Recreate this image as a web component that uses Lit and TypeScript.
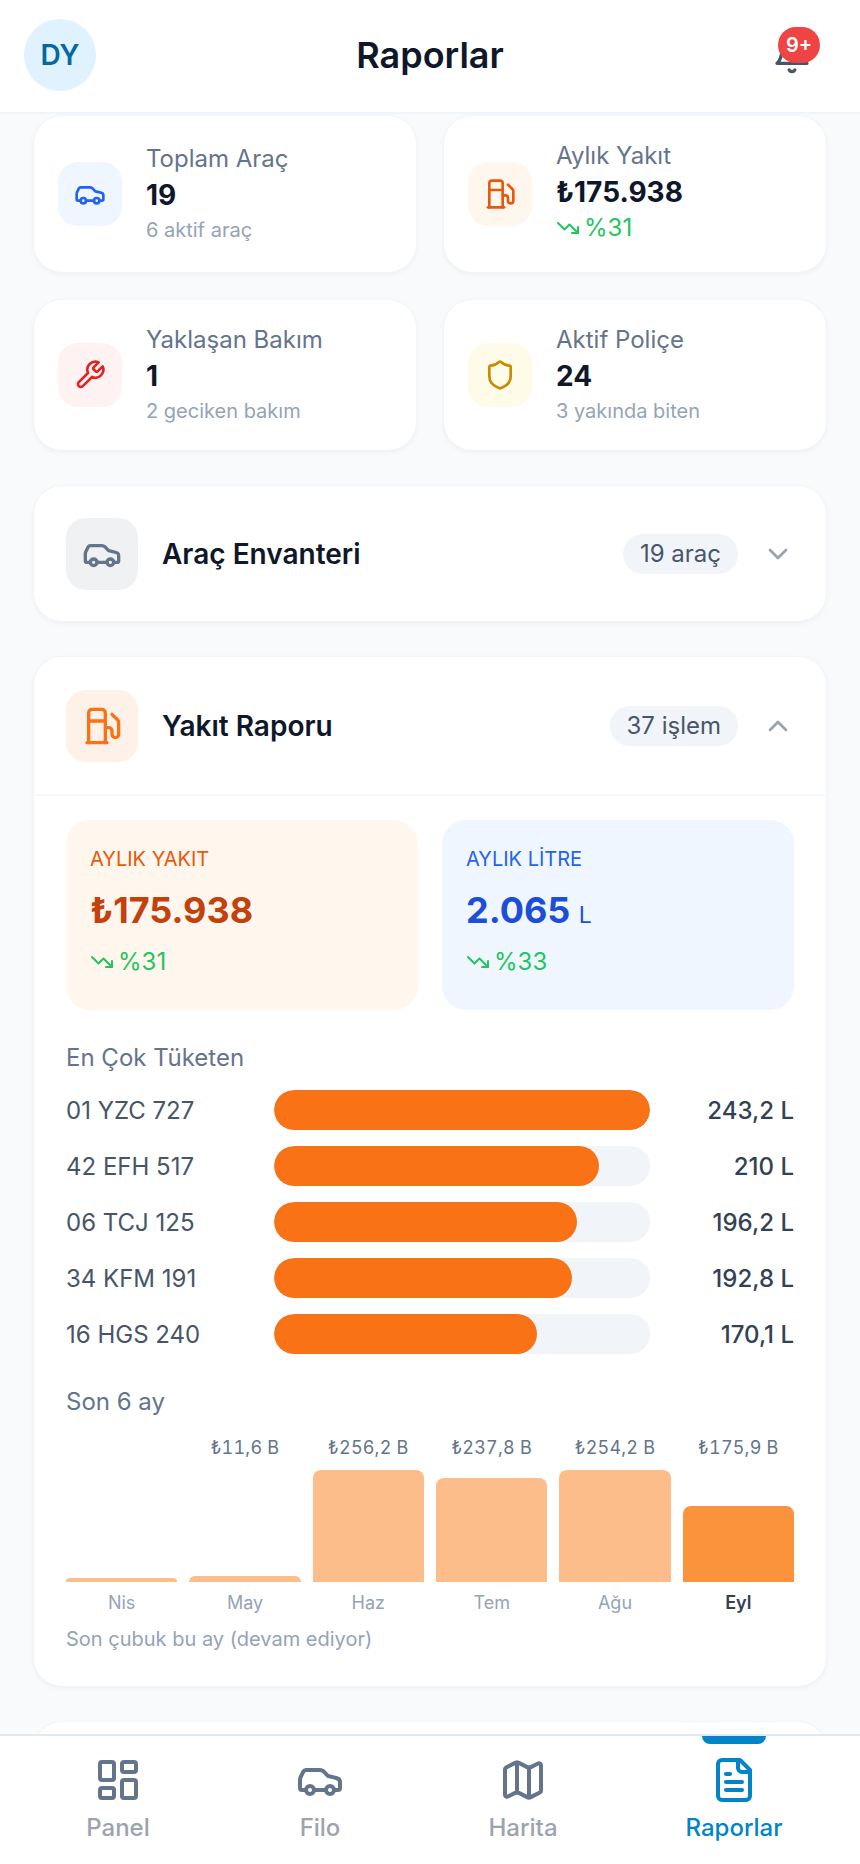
import { LitElement, html, css, svg } from "lit";
import { customElement } from "lit/decorators.js";

const I: Record<string, any> = {
  car: svg`<path d="M19 17h2c.6 0 1-.4 1-1v-3c0-.9-.7-1.7-1.5-1.9C18.7 10.6 16 10 16 10s-1.3-1.4-2.2-2.3c-.5-.4-1.1-.7-1.8-.7H5c-.6 0-1.1.4-1.4.9l-1.4 2.9A3.7 3.7 0 0 0 2 12v4c0 .6.4 1 1 1h2"/><circle cx="7" cy="17" r="2"/><path d="M9 17h6"/><circle cx="17" cy="17" r="2"/>`,
  fuel: svg`<line x1="3" x2="15" y1="22" y2="22"/><line x1="4" x2="14" y1="9" y2="9"/><path d="M14 22V4a2 2 0 0 0-2-2H6a2 2 0 0 0-2 2v18"/><path d="M14 13h2a2 2 0 0 1 2 2v2a2 2 0 0 0 2 2a2 2 0 0 0 2-2V9.83a2 2 0 0 0-.59-1.42L18 5"/>`,
  wrench: svg`<path d="M14.7 6.3a1 1 0 0 0 0 1.4l1.6 1.6a1 1 0 0 0 1.4 0l3.77-3.77a6 6 0 0 1-7.94 7.94l-6.91 6.91a2.12 2.12 0 0 1-3-3l6.91-6.91a6 6 0 0 1 7.94-7.94l-3.76 3.76z"/>`,
  shield: svg`<path d="M20 13c0 5-3.5 7.5-7.66 8.95a1 1 0 0 1-.67-.01C7.5 20.5 4 18 4 13V6a1 1 0 0 1 1-1c2 0 4.5-1.2 6.24-2.72a1.17 1.17 0 0 1 1.52 0C14.51 3.81 17 5 19 5a1 1 0 0 1 1 1z"/>`,
  grid: svg`<rect width="7" height="9" x="3" y="3" rx="1"/><rect width="7" height="5" x="14" y="3" rx="1"/><rect width="7" height="9" x="14" y="12" rx="1"/><rect width="7" height="5" x="3" y="16" rx="1"/>`,
  map: svg`<path d="M14.106 5.553a2 2 0 0 0 1.788 0l3.659-1.83A1 1 0 0 1 21 4.619v12.764a1 1 0 0 1-.553.894l-4.553 2.277a2 2 0 0 1-1.788 0l-4.212-2.106a2 2 0 0 0-1.788 0l-3.659 1.83A1 1 0 0 1 3 19.381V6.618a1 1 0 0 1 .553-.894l4.553-2.277a2 2 0 0 1 1.788 0z"/><path d="M15 5.764v15"/><path d="M9 3.236v15"/>`,
  file: svg`<path d="M15 2H6a2 2 0 0 0-2 2v16a2 2 0 0 0 2 2h12a2 2 0 0 0 2-2V7Z"/><path d="M14 2v4a2 2 0 0 0 2 2h4"/><path d="M10 9H8"/><path d="M16 13H8"/><path d="M16 17H8"/>`,
  bell: svg`<path d="M6 8a6 6 0 0 1 12 0c0 7 3 9 3 9H3s3-2 3-9"/><path d="M10.3 21a1.94 1.94 0 0 0 3.4 0"/>`,
  down: svg`<polyline points="22 17 13.5 8.5 8.5 13.5 2 7"/><polyline points="16 17 22 17 22 11"/>`,
  chevD: svg`<path d="m6 9 6 6 6-6"/>`,
  chevU: svg`<path d="m18 15-6-6-6 6"/>`,
};

const icon = (n: string, s: number) => html`<svg width=${s} height=${s} viewBox="0 0 24 24" fill="none" stroke="currentColor" stroke-width="2" stroke-linecap="round" stroke-linejoin="round">${I[n]}</svg>`;

const trend = (t: string, s = 24) => html`<span class="trend">${icon("down", s)}<span>${t}</span></span>`;

const rows = [
  ["01 YZC 727", 243.2, "243,2 L"],
  ["42 EFH 517", 210, "210 L"],
  ["06 TCJ 125", 196.2, "196,2 L"],
  ["34 KFM 191", 192.8, "192,8 L"],
  ["16 HGS 240", 170.1, "170,1 L"],
] as const;

const months = [
  ["Nis", "", 4],
  ["May", "₺11,6 B", 6],
  ["Haz", "₺256,2 B", 112],
  ["Tem", "₺237,8 B", 104],
  ["Ağu", "₺254,2 B", 112],
  ["Eyl", "₺175,9 B", 76],
] as const;

@customElement("app-root")
export class AppRoot extends LitElement {
  static styles = css`
    :host { display: block; font-family: Inter, "Noto Sans", sans-serif; color: #0f172a; }
    * { box-sizing: border-box; }
    svg { display: block; flex: none; }
    .screen { height: 1864px; display: flex; flex-direction: column; background: #f8fafc; overflow: hidden; }
    header { height: 114px; flex: none; background: #fff; border-bottom: 2px solid #f1f5f9; display: grid; grid-template-columns: 1fr auto 1fr; align-items: center; padding: 0 24px 2px; }
    .avatar { width: 72px; height: 72px; border-radius: 50%; background: #e0f2fe; color: #0369a1; font-size: 28px; font-weight: 600; display: flex; align-items: center; justify-content: center; }
    h1 { margin: 0; font-size: 36px; font-weight: 600; line-height: 44px; }
    .bell { justify-self: end; margin-right: 24px; position: relative; color: #475569; }
    .badge { position: absolute; left: 6px; top: -8px; width: 42px; height: 36px; border-radius: 18px; background: #ef4444; color: #fff; font-size: 20px; font-weight: 600; display: flex; align-items: center; justify-content: center; }
    main { flex: 1; min-height: 0; overflow: hidden; padding: 2px 34px 0; display: flex; flex-direction: column; gap: 36px; }
    .stats { display: grid; grid-template-columns: 382px 382px; column-gap: 28px; row-gap: 28px; }
    .card { background: #fff; border-radius: 28px; box-shadow: 0 0 0 1px rgba(241,245,249,.7), 0 2px 6px rgba(15,23,42,.05); }
    .stat { display: flex; align-items: center; gap: 24px; padding: 23px 24px; }
    .stat-ic { width: 64px; height: 64px; border-radius: 20px; display: flex; align-items: center; justify-content: center; flex: none; }
    .blue { background: #eff6ff; color: #2563eb; }
    .orange { background: #fff7ed; color: #ea580c; }
    .red { background: #fef2f2; color: #dc2626; }
    .yellow { background: #fefce8; color: #ca8a04; }
    .st-label { font-size: 24px; line-height: 34px; color: #64748b; }
    .st-value { font-size: 28px; font-weight: 700; line-height: 38px; }
    .st-sub { font-size: 20px; line-height: 32px; color: #94a3b8; }
    .trend { display: flex; align-items: center; gap: 4px; color: #22c55e; font-size: 24px; line-height: 34px; }
    .stat .trend { padding-bottom: 4px; }
    .sec-head { display: flex; align-items: center; gap: 24px; padding: 0 32px; height: 135px; }
    .sec-ic { width: 72px; height: 72px; border-radius: 20px; display: flex; align-items: center; justify-content: center; flex: none; }
    .slate { background: rgba(100,116,139,.1); color: #64748b; }
    .peach { background: rgba(249,115,22,.1); color: #f97316; }
    h2 { margin: 0; flex: 1; font-size: 28px; font-weight: 600; line-height: 36px; }
    .pill { height: 40px; padding: 0 17px; border-radius: 20px; background: #f1f5f9; color: #475569; font-size: 24px; display: flex; align-items: center; }
    .chev { color: #94a3b8; }
    .sec-open .sec-head { height: 139px; border-bottom: 2px solid #f8fafc; }
    .body { padding: 24px 32px 33px; }
    .tiles { display: grid; grid-template-columns: 1fr 1fr; gap: 24px; }
    .tile { height: 190px; border-radius: 24px; padding: 23px 24px; }
    .tile.o { background: #fff7ed; }
    .tile.b { background: #eff6ff; }
    .t-label { font-size: 20px; line-height: 32px; }
    .o .t-label { color: #ea580c; }
    .b .t-label { color: #2563eb; }
    .t-value { font-size: 36px; font-weight: 700; height: 56px; line-height: 56px; margin-top: 7px; }
    .o .t-value { color: #c2410c; }
    .b .t-value { color: #1d4ed8; }
    .t-value small { font-size: 23px; font-weight: 400; }
    .tile .trend { margin-top: 7px; }
    .sub-h { font-size: 24px; line-height: 32px; color: #64748b; }
    .bars { margin-top: 32px; }
    .rows { display: flex; flex-direction: column; gap: 16px; margin-top: 16px; }
    .row { display: grid; grid-template-columns: 208px 376px 1fr; align-items: center; height: 40px; }
    .plate { font-size: 24px; color: #475569; }
    .track { height: 40px; border-radius: 20px; background: #f1f5f9; overflow: hidden; }
    .fill { height: 100%; border-radius: 20px; background: #f97316; }
    .val { text-align: right; font-size: 24px; font-weight: 500; color: #334155; }
    .six { margin-top: 32px; }
    .chart { display: grid; grid-template-columns: repeat(6, 1fr); column-gap: 12px; margin-top: 18px; }
    .col { display: flex; flex-direction: column; justify-content: flex-end; height: 122px; }
    .amt { font-size: 18px; height: 24px; line-height: 24px; color: #64748b; text-align: center; white-space: nowrap; letter-spacing: .2px; font-variant-numeric: tabular-nums; }
    .bar { background: #fdbd8a; border-radius: 8px 8px 0 0; }
    .bar.now { background: #fb923c; }
    .mon { text-align: center; font-size: 18px; line-height: 24px; color: #94a3b8; margin-top: 9px; }
    .mon.now { color: #334155; font-weight: 600; }
    .note { font-size: 20px; line-height: 28px; color: #94a3b8; margin-top: 10px; }
    nav { height: 130px; flex: none; background: #fff; border-top: 2px solid #e2e8f0; display: grid; grid-template-columns: 200px 204px 202px 220px; padding-left: 18px; }
    .tab { position: relative; display: flex; flex-direction: column; align-items: center; padding-top: 20px; color: #64748b; }
    .tab span { font-size: 24px; line-height: 32px; color: #9ca3af; margin-top: 8px; font-weight: 500; }
    .tab.on { color: #0284c7; }
    .tab.on span { color: #0284c7; }
    .ind { position: absolute; top: 0; left: 50%; margin-left: -32px; width: 64px; height: 8px; background: #0284c7; border-radius: 0 0 8px 8px; }
    .stub { flex: none; height: 60px; }
  `;

  render() {
    return html`<div class="screen">
      <header>
        <div><div class="avatar">DY</div></div>
        <h1>Raporlar</h1>
        <div class="bell">${icon("bell", 40)}<div class="badge">9+</div></div>
      </header>
      <main>
        <div class="stats">
          <div class="card stat"><div class="stat-ic blue">${icon("car", 32)}</div><div><div class="st-label">Toplam Araç</div><div class="st-value">19</div><div class="st-sub">6 aktif araç</div></div></div>
          <div class="card stat"><div class="stat-ic orange">${icon("fuel", 32)}</div><div><div class="st-label">Aylık Yakıt</div><div class="st-value">₺175.938</div>${trend("%31")}</div></div>
          <div class="card stat"><div class="stat-ic red">${icon("wrench", 32)}</div><div><div class="st-label">Yaklaşan Bakım</div><div class="st-value">1</div><div class="st-sub">2 geciken bakım</div></div></div>
          <div class="card stat"><div class="stat-ic yellow">${icon("shield", 32)}</div><div><div class="st-label">Aktif Poliçe</div><div class="st-value">24</div><div class="st-sub">3 yakında biten</div></div></div>
        </div>
        <section class="card">
          <div class="sec-head"><div class="sec-ic slate">${icon("car", 40)}</div><h2>Araç Envanteri</h2><div class="pill">19 araç</div><div class="chev">${icon("chevD", 32)}</div></div>
        </section>
        <section class="card sec-open">
          <div class="sec-head"><div class="sec-ic peach">${icon("fuel", 40)}</div><h2>Yakıt Raporu</h2><div class="pill">37 işlem</div><div class="chev">${icon("chevU", 32)}</div></div>
          <div class="body">
            <div class="tiles">
              <div class="tile o"><div class="t-label">AYLIK YAKIT</div><div class="t-value">₺175.938</div>${trend("%31")}</div>
              <div class="tile b"><div class="t-label">AYLIK LİTRE</div><div class="t-value">2.065 <small>L</small></div>${trend("%33")}</div>
            </div>
            <div class="bars">
              <div class="sub-h">En Çok Tüketen</div>
              <div class="rows">
                ${rows.map(([p, v, t]) => html`<div class="row"><div class="plate">${p}</div><div class="track"><div class="fill" style="width:${(v / 243.2) * 100}%"></div></div><div class="val">${t}</div></div>`)}
              </div>
            </div>
            <div class="six">
              <div class="sub-h">Son 6 ay</div>
              <div class="chart">
                ${months.map(([m, a, h], i) => html`<div><div class="amt">${a}</div><div class="col"><div class="bar ${i === 5 ? "now" : ""}" style="height:${h}px"></div></div><div class="mon ${i === 5 ? "now" : ""}">${m}</div></div>`)}
              </div>
              <div class="note">Son çubuk bu ay (devam ediyor)</div>
            </div>
          </div>
        </section>
        <section class="card stub"></section>
      </main>
      <nav>
        <div class="tab">${icon("grid", 48)}<span>Panel</span></div>
        <div class="tab">${icon("car", 48)}<span>Filo</span></div>
        <div class="tab">${icon("map", 48)}<span>Harita</span></div>
        <div class="tab on"><div class="ind"></div>${icon("file", 48)}<span>Raporlar</span></div>
      </nav>
    </div>`;
  }
}
